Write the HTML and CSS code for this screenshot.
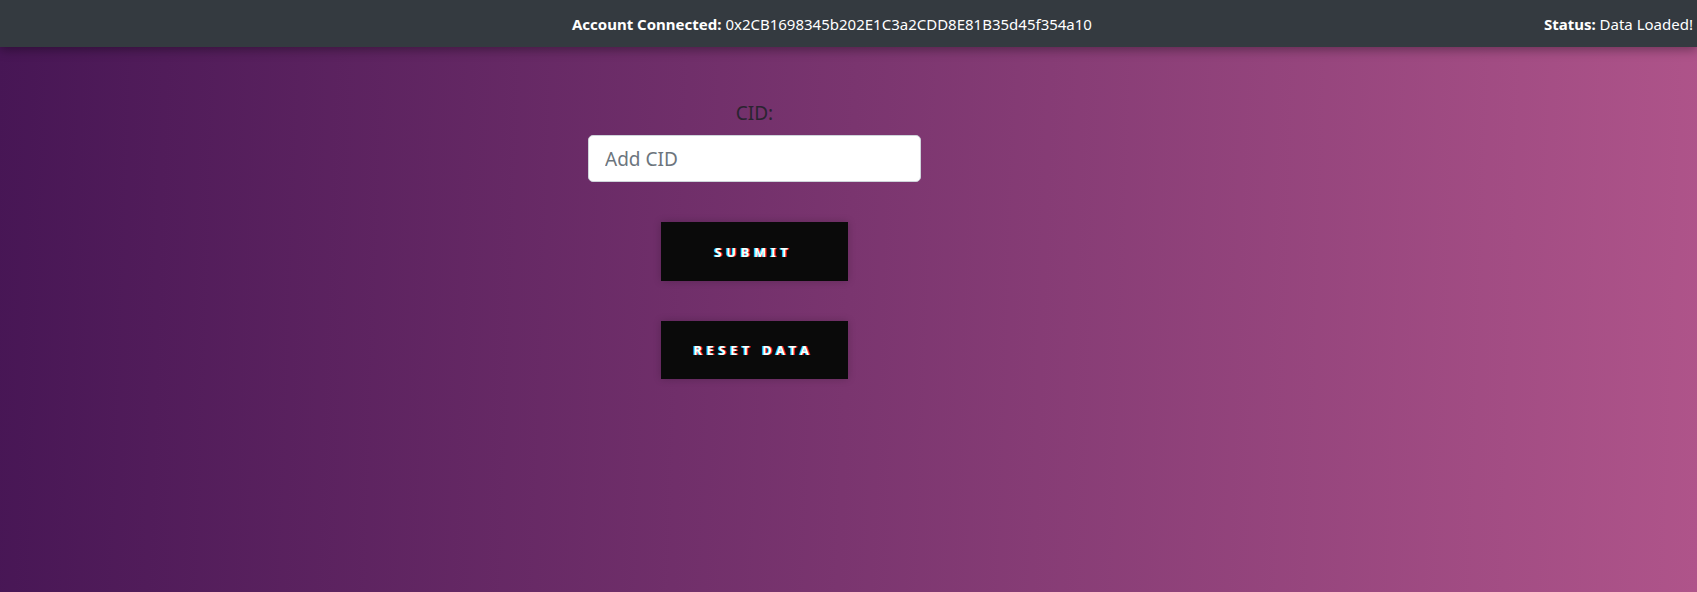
FILE: index.html
```html
<!DOCTYPE html>
<html lang="en">
<head>
<meta charset="utf-8">
<title>CID</title>
<link rel="stylesheet" href="styles.css">
</head>
<body>
<header class="topbar">
  <div class="spacer"></div>
  <div class="account"><b>Account Connected:</b> 0x2CB1698345b202E1C3a2CDD8E81B35d45f354a10</div>
  <div class="status"><b>Status:</b> Data Loaded!</div>
</header>
<main class="main">
  <form class="cid-form" onsubmit="return false">
    <label class="cid-label" for="cid">CID:</label>
    <input class="cid-input" id="cid" type="text" placeholder="Add CID">
    <button class="glitch-btn" type="submit">SUBMIT</button>
    <button class="glitch-btn" type="button">RESET DATA</button>
  </form>
</main>
</body>
</html>
```

FILE: styles.css
```css
* { box-sizing: border-box; }
html, body { margin: 0; height: 100%; }
body {
  font-family: "Noto Sans", "Open Sans", sans-serif;
  background: linear-gradient(92deg, #471655 0%, #7a356f 50%, #af548a 100%);
  color: #212529;
  overflow: hidden;
}
.topbar {
  height: 47px;
  background: #343a40;
  color: #fff;
  font-size: 15px;
  display: flex;
  align-items: center;
  justify-content: space-between;
  padding-right: 4px;
  box-shadow: 0 3px 10px rgba(0,0,0,0.35);
  position: relative;
  z-index: 1;
}
.topbar b { font-weight: 700; }
.spacer { width: 120px; }
.main {
  display: flex;
  justify-content: center;
  padding-right: 188px;
  padding-top: 51px;
}
.cid-form {
  display: flex;
  flex-direction: column;
  align-items: center;
}
.cid-label {
  font-size: 19px;
  line-height: 30px;
  color: #2a2430;
  margin-bottom: 7px;
}
.cid-input {
  width: 333px;
  height: 47px;
  padding: 8px 16px;
  font-family: inherit;
  font-size: 19px;
  color: #495057;
  background: #fff;
  border: 1px solid #ced4da;
  border-radius: 5px;
  outline: none;
}
.cid-input::placeholder { color: #6c757d; }
.glitch-btn {
  width: 187px;
  height: 59px;
  margin-top: 40px;
  background: #0a0a0a;
  color: #fff;
  border: none;
  font-family: inherit;
  font-weight: 700;
  font-size: 13px;
  letter-spacing: 4.6px;
  padding-left: 4px;
  text-shadow: -1px 0 #2ee6ff, 1px 0 #ff1a3c;
  box-shadow: 0 0 8px rgba(0,0,0,0.2);
  cursor: pointer;
}
.glitch-btn + .glitch-btn { height: 58px; }
```
